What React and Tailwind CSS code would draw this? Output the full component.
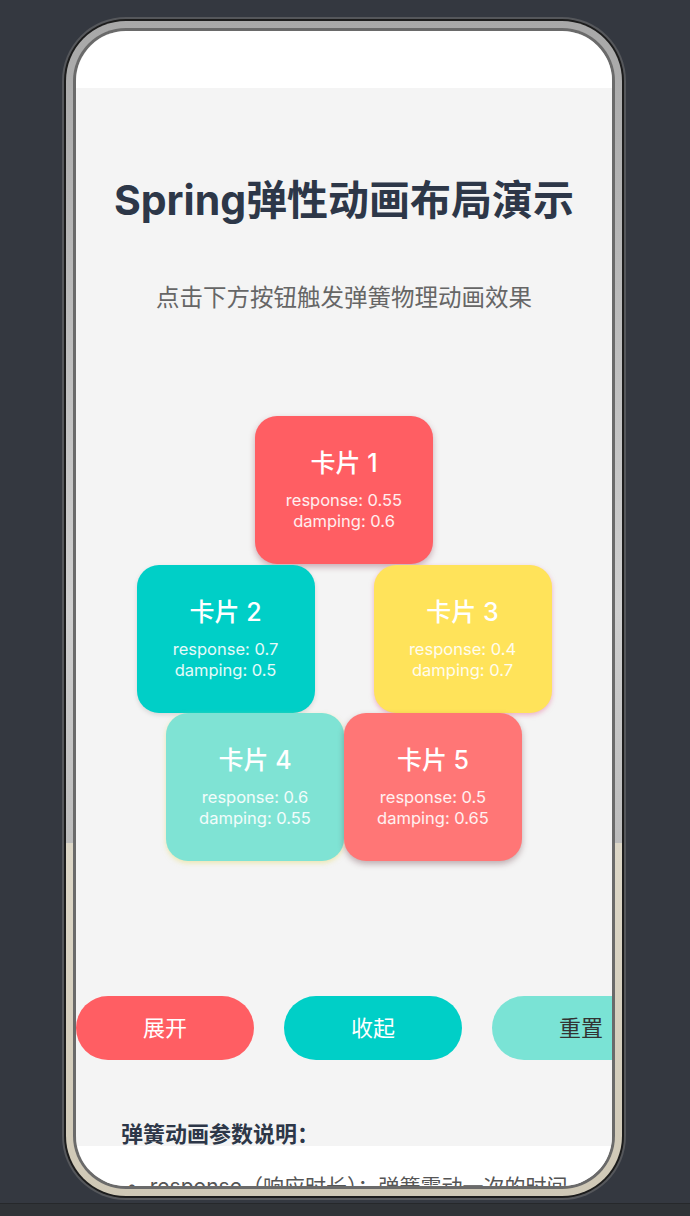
import React from "react"

const cards = [
  { id: 1, response: "0.55", damping: "0.6", color: "bg-[#ff5e63]", shadow: "shadow-[0_3px_6px_rgba(120,40,60,0.35)]" },
  { id: 2, response: "0.7", damping: "0.5", color: "bg-[#00cfc7]", shadow: "shadow-[0_2px_5px_rgba(0,0,0,0.12)]" },
  { id: 3, response: "0.4", damping: "0.7", color: "bg-[#ffe35a]", shadow: "shadow-[0_2px_5px_rgba(230,120,160,0.55)]" },
  { id: 4, response: "0.6", damping: "0.55", color: "bg-[#7fe3d4]", shadow: "shadow-[0_2px_5px_rgba(230,220,120,0.55)]" },
  { id: 5, response: "0.5", damping: "0.65", color: "bg-[#ff7676]", shadow: "shadow-[0_3px_6px_rgba(90,40,50,0.35)]" },
]

const font = "font-['Inter','Noto_Sans_CJK_SC',sans-serif]"

function Card({ card }) {
  return (
    <div
      className={`flex h-[148px] w-[178px] shrink-0 flex-col items-center justify-center rounded-[22px] text-white ${card.color} ${card.shadow}`}
    >
      <p className="mb-[12px] text-[25px] leading-[30px] font-medium">卡片 {card.id}</p>
      <p className="text-[16.5px] leading-[21px] text-white/90">response: {card.response}</p>
      <p className="text-[16.5px] leading-[21px] text-white/90">damping: {card.damping}</p>
    </div>
  )
}

export default function App() {
  return (
    <div className={`flex h-[1216px] w-[690px] flex-col bg-[#343840] ${font}`}>
      <div className="pt-[17px] pl-[62px]">
        {/* Phone frame */}
        <div className="h-[1183px] w-[564px] rounded-[64px] bg-[#55575b] p-[2px]">
          <div className="h-full w-full rounded-[62px] bg-[#1c1c1c] p-[2px]">
            <div className="h-full w-full rounded-[60px] bg-[linear-gradient(to_bottom,#a8a8a8_0%,#cfcfcf_50%,#bcbcbc_70%,#ddd7c7_70%,#cfc8b6_100%)] p-[7px]">
              <div className="h-full w-full rounded-[53px] bg-[#6a6a6a] p-[3px]">
                {/* Screen */}
                <div className="flex h-full w-full flex-col overflow-hidden rounded-[50px] bg-white shadow-[inset_2px_2px_5px_rgba(0,0,0,0.55)]">
                  <div className="h-[57px] shrink-0 bg-white" />

                  <div className="flex h-[1058px] shrink-0 flex-col overflow-hidden bg-[#f4f4f4]">
                    <h1 className="pt-[88px] text-center text-[41px] leading-[48px] font-bold text-[#2d3748]">
                      Spring弹性动画布局演示
                    </h1>
                    <p className="mt-[58px] text-center text-[23.5px] leading-[32px] text-[#666666]">
                      点击下方按钮触发弹簧物理动画效果
                    </p>

                    {/* Cards */}
                    <div className="mt-[102px] flex flex-col items-center">
                      <div className="flex justify-center">
                        <Card card={cards[0]} />
                      </div>
                      <div className="mt-[1px] flex justify-center gap-[59px]">
                        <Card card={cards[1]} />
                        <Card card={cards[2]} />
                      </div>
                      <div className="flex justify-center">
                        <Card card={cards[3]} />
                        <Card card={cards[4]} />
                      </div>
                    </div>

                    {/* Buttons */}
                    <div className="mt-[135px] flex gap-[30px]">
                      <button className="h-[64px] w-[178px] shrink-0 rounded-full bg-[#ff5e63] text-[22px] text-white">
                        展开
                      </button>
                      <button className="h-[64px] w-[178px] shrink-0 rounded-full bg-[#00cfc7] text-[22px] text-white">
                        收起
                      </button>
                      <button className="h-[64px] w-[178px] shrink-0 rounded-full bg-[#7ae3d5] text-[22px] text-[#333333]">
                        重置
                      </button>
                    </div>

                    <h2 className="mt-[59px] pl-[45px] text-[22px] leading-[30px] font-bold text-[#2d3748]">
                      弹簧动画参数说明：
                    </h2>
                  </div>

                  <div className="flex-1 bg-white">
                    <p className="mt-[26px] flex pl-[50px] text-[21px] leading-[30px] whitespace-nowrap text-[#555555]">
                      <span className="mr-[12px]">•</span>
                      <span>response（响应时长）：弹簧震动一次的时间</span>
                    </p>
                  </div>
                </div>
              </div>
            </div>
          </div>
        </div>
      </div>
      <div className="mt-[3px] flex-1 border-t border-[#26282b] bg-[#303337]" />
    </div>
  )
}
